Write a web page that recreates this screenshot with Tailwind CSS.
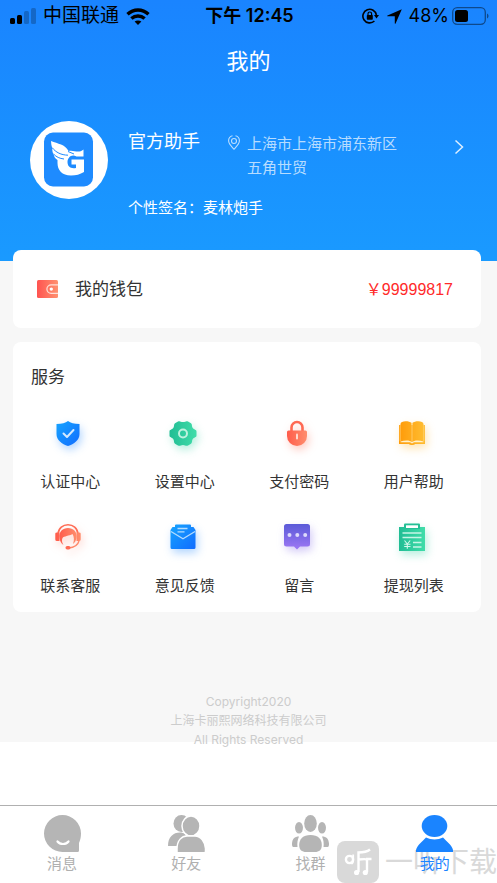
<!DOCTYPE html>
<html lang="zh-CN">

<head>
 <meta charset="UTF-8">
 <meta name="viewport" content="width=device-width, initial-scale=1.0">
 <title>我的</title>
 <script src="https://cdn.jsdelivr.net/npm/@tailwindcss/browser@4"></script>
</head>

<body class="relative flex min-h-screen flex-col bg-white font-['Inter','Noto_Sans_CJK_SC',sans-serif] text-[15px] text-[#333]">
 <!-- Header -->
 <header class="bg-linear-to-b from-[#1a84ff] to-[#1a9aff] pb-[41px] text-white">
  <div class="grid h-8 grid-cols-3 items-center pr-2 pl-[10px] text-lg leading-8 text-black">
   <div class="flex items-center gap-[7px]">
    <svg class="h-[18px] w-[26px] shrink-0" viewBox="0 0 26 18">
     <rect x="0" y="11" width="5" height="6" rx="1.5" />
     <rect x="7" y="8" width="5" height="9" rx="1.5" />
     <rect x="14" y="4" width="5" height="13" rx="1.5" opacity=".22" />
     <rect x="21" y="1" width="5" height="16" rx="1.5" opacity=".22" />
    </svg>
    <span class="shrink-0 text-[19px]">中国联通</span>
    <svg class="h-[17px] w-6 shrink-0" viewBox="0 0 24 17" fill="none" stroke="#000" stroke-width="3.4">
     <path d="M1.5 6.3C7.5.6 16.5.6 22.5 6.3" />
     <path d="M5.4 10.6C9.2 7.1 14.8 7.1 18.600 10.6" />
     <path d="M12 17L8.600 13.600C10.500 12 13.500 12 15.400 13.600Z" fill="#000" stroke="none" />
    </svg>
   </div>
   <span class="text-center font-semibold whitespace-nowrap">下午 12:45</span>
   <div class="flex items-center justify-end">
    <svg class="mr-2 h-4 w-[17px]" viewBox="0 0 17 16" fill="none" stroke="#000" stroke-width="1.6">
     <path d="M12.400 13A6.800 6.800 0 1 1 14.400 7" />
     <path d="M12 7H17L14.500 10.500Z" fill="#000" stroke="none" />
     <rect x="4.800" y="7" width="6" height="4.800" rx=".8" fill="#000" stroke="none" />
     <path d="M6 7.500V5.800a1.800 1.800 0 0 1 3.600 0V7.500" stroke-width="1.200" />
    </svg>
    <svg class="mr-[7px] h-[15px] w-[15px]" viewBox="0 0 15 15">
     <path d="M14.800.3L8.600 14.500C8.400 15 7.800 15 7.800 14.300V7.200H.7C0 7.200 0 6.600.5 6.400Z" />
    </svg>
    <span>48%</span>
    <svg class="ml-[3px] h-[18px] w-[37px]" viewBox="0 0 37 18">
     <rect x=".7" y=".7" width="32.600" height="16.600" rx="4.500" fill="none" stroke="#000" stroke-opacity=".45" stroke-width="1.300" />
     <rect x="3" y="3" width="13" height="12" rx="2.500" />
     <path d="M35 6.500C37 7.200 37 10.800 35 11.500Z" opacity=".45" />
    </svg>
   </div>
  </div>

  <h1 class="text-center text-[22px] leading-[58px]">我的</h1>

  <div class="mt-[31px] flex items-start pr-[33px] pl-[30px]">
   <svg class="h-[78px] w-[78px] shrink-0" viewBox="0 0 78 78">
    <circle cx="39" cy="39" r="39" fill="#fff" />
    <rect x="14" y="11.500" width="49" height="54" rx="9" fill="#1e8bff" />
    <path d="M21 20C28 23 35 23 38.500 30C44 28.500 48 33 53.500 28.500V35.500H46.500C42 32.500 37.500 36 37.500 41C37.500 45.500 40.500 48 46 47V43.500H41.500V38.500H54V51C50 53.500 46 54.500 41 54.500C32 54.500 27.500 49 27.500 42V39C25 37.500 24 35.500 23.800 33.800C22.500 31.500 22.200 29.500 22.300 27.500C21.500 25 21 22.500 21 20Z" fill="#fff" />
    <path d="M22 26.500C26 31.500 31 34 38 34.200M23.500 33C26.500 36 29.500 37.500 34 38M38 30.500L44 33" fill="none" stroke="#1e8bff" stroke-width="1" />
   </svg>
   <div class="ml-5 grow pt-2">
    <div class="flex items-start">
     <h2 class="w-[100px] shrink-0 text-lg leading-[26px]">官方助手</h2>
     <div class="mt-[3px] flex gap-[7px] text-white/70">
      <svg class="mt-[3px] h-[15px] w-3 shrink-0" viewBox="0 0 12 15" fill="none" stroke="currentColor" stroke-width="1.100">
       <path d="M4.500.8C2.300 1.300.6 3.300.6 5.800C.6 9 3.500 11.500 6 14.200C8.500 11.500 11.400 9 11.400 5.800C11.400 3.300 9.700 1.300 7.500.8" />
       <circle cx="6" cy="6" r="2.500" />
      </svg>
      <p class="max-w-40 leading-6">上海市上海市浦东新区五角世贸</p>
     </div>
     <a href="#" class="mt-[10px] ml-auto" aria-label="个人资料">
      <svg class="h-4 w-[10px]" viewBox="0 0 10 16" fill="none" stroke="#fff" stroke-opacity=".85" stroke-width="1.500">
       <path d="M1.500 1.500L8.500 8L1.500 14.500" />
      </svg>
     </a>
    </div>
    <p class="mt-4 leading-6">个性签名：麦林炮手</p>
   </div>
  </div>
 </header>

 <!-- Content -->
 <main class="bg-[#f7f7f7] pr-4 pl-[13px]">
  <a href="#" class="relative -mt-[11px] flex h-[78px] items-center rounded-lg bg-white pr-7 pl-6">
   <svg class="h-[18px] w-[21px]" viewBox="0 0 21 18">
    <defs>
     <linearGradient id="wallet">
      <stop stop-color="#ff5350" />
      <stop offset="1" stop-color="#ff9270" />
     </linearGradient>
    </defs>
    <rect width="21" height="18" rx="1.500" fill="url(#wallet)" />
    <path d="M21 4.800H14.200a4.300 4.300 0 0 0 0 8.600H21" fill="none" stroke="#ffe0d8" stroke-width="1.200" />
    <circle cx="14.300" cy="9.100" r="1.700" fill="#fff" />
   </svg>
   <span class="ml-[17px] pt-[2px] text-[17px]">我的钱包</span>
   <span class="ml-auto pt-[2px] font-['Liberation_Sans','Noto_Sans_CJK_SC',sans-serif] text-base text-[#ff2a2a]">￥99999817</span>
  </a>

  <section class="mt-[14px] rounded-lg bg-white pt-[23px] pb-[14px]">
   <h2 class="pl-[18px] text-[17px] leading-6">服务</h2>
   <div class="mt-7 grid grid-cols-4 gap-y-[27px] pr-[10px] leading-6">
    <a href="#" class="flex flex-col items-center gap-[21px]">
     <svg class="h-8 w-9 drop-shadow-[2px_4px_4px_#1a84ff55]" viewBox="0 0 36 32">
      <defs>
       <linearGradient id="blue" x2="1" y2="1">
        <stop stop-color="#16a4ff" />
        <stop offset="1" stop-color="#116cff" />
       </linearGradient>
      </defs>
      <path d="M16 4C18.500 6 22 7 27.500 7V17C27.500 23 22 27 16 29C10 27 4.500 23 4.500 17V7C10 7 13.500 6 16 4Z" fill="url(#blue)" />
      <path d="M11.500 16.500L15 20L21.500 13" fill="none" stroke="#d4e9ff" stroke-width="2" stroke-linecap="round" stroke-linejoin="round" />
     </svg>
     认证中心
    </a>
    <a href="#" class="flex flex-col items-center gap-[21px]">
     <svg class="h-8 w-9 drop-shadow-[2px_4px_4px_#2dcf9f55]" viewBox="0 0 36 32">
      <defs>
       <linearGradient id="green">
        <stop stop-color="#21bd94" />
        <stop offset="1" stop-color="#40dda9" />
       </linearGradient>
      </defs>
      <path d="M11 4.500C13 3.500 13.500 5 16 5C18.500 5 19 3.500 21 4.500L24 6.200C25.500 7.500 24.500 9 25.700 11C27 12.700 29.500 12.500 29.500 14.500V18.500C29.500 20.500 27 20.300 25.700 22C24.500 24 25.500 25.500 24 26.800L21 28.500C19 29.500 18.500 28 16 28C13.500 28 13 29.500 11 28.500L8 26.800C6.500 25.500 7.500 24 6.300 22C5 20.300 2.500 20.500 2.500 18.500V14.500C2.500 12.500 5 12.700 6.300 11C7.500 9 6.500 7.500 8 6.200Z" fill="url(#green)" />
      <circle cx="16" cy="16.500" r="4" fill="none" stroke="#bff2df" stroke-width="2" />
     </svg>
     设置中心
    </a>
    <a href="#" class="flex flex-col items-center gap-[21px]">
     <svg class="h-8 w-9 drop-shadow-[2px_4px_4px_#ff6a5055]" viewBox="0 0 36 32">
      <defs>
       <linearGradient id="red">
        <stop stop-color="#ff5c4b" />
        <stop offset="1" stop-color="#ff8d6d" />
       </linearGradient>
      </defs>
      <path d="M10.500 15V10.500a5.500 5.500 0 0 1 11 0V15" fill="none" stroke="#ff6852" stroke-width="2.600" />
      <path d="M7.500 13.500H24.500Q26 13.500 26 15V19a10 10 0 0 1-20 0V15Q6 13.500 7.500 13.500Z" fill="url(#red)" />
      <path d="M16 17.500V21.500" stroke="#ffd9ce" stroke-width="2" stroke-linecap="round" />
     </svg>
     支付密码
    </a>
    <a href="#" class="flex flex-col items-center gap-[21px]">
     <svg class="h-8 w-9 drop-shadow-[2px_4px_4px_#ffb02055]" viewBox="0 0 36 32">
      <defs>
       <linearGradient id="orange">
        <stop stop-color="#ff9c0a" />
        <stop offset="1" stop-color="#ffbc30" />
       </linearGradient>
      </defs>
      <path d="M3 8H29V27H19C18.500 28.300 13.500 28.300 13 27H3Z" fill="url(#orange)" />
      <path d="M4.500 25.300H14L16 26.600L18 25.300H27.500V24.500C23 23 18 23 16 25.300C14 23 9 23 4.500 24.500Z" fill="#fff1ce" />
      <path d="M4.500 7C4.500 3.500 13 3.500 15.600 6V24C13 21.500 8 21.500 4.500 24Z M27.500 7C27.500 3.500 19 3.500 16.400 6V24C19 21.500 24 21.500 27.500 24Z" fill="url(#orange)" />
      <path d="M16 5.500V25M4.200 8V24M27.800 8V24" stroke="#ffdd96" stroke-width=".6" />
     </svg>
     用户帮助
    </a>
    <a href="#" class="flex flex-col items-center gap-[21px]">
     <svg class="h-8 w-9 drop-shadow-[2px_4px_4px_#ff6a5044]" viewBox="0 0 36 32">
      <path d="M6 13C6.500 7 11 3.800 16 3.800S25.500 7 26 13" fill="none" stroke="#ff6c55" stroke-width="1.600" />
      <path d="M3.300 12.500Q3.300 11.500 5 11.500H7.500V20H5Q3.300 20 3.300 18.500ZM28.700 12.500Q28.700 11.500 27 11.500H24.500V20H27Q28.700 20 28.700 18.500Z" fill="url(#red)" />
      <path d="M7.500 17C6.500 10.500 11 7 16 7S25.500 10.500 24.500 17C24 19.500 23 21.500 21 23C22.500 19 22 15.500 20.500 13C17 15 12 15 10.500 17C9.500 19 10 22 11.500 24C9 22.500 8 20 7.500 17Z" fill="url(#red)" />
      <path d="M27 20C26 24 22 26.500 16.500 27" fill="none" stroke="#ff8a6c" stroke-width="1.300" />
      <rect x="13.500" y="25" width="5" height="3.500" rx="1.700" fill="#ff6b55" />
     </svg>
     联系客服
    </a>
    <a href="#" class="flex flex-col items-center gap-[21px]">
     <svg class="h-8 w-9 drop-shadow-[2px_4px_4px_#1a84ff55]" viewBox="0 0 36 32">
      <path d="M8 6V4.500Q8 3.500 9 3.500H23Q24 3.500 24 4.500V6H26.500L28.500 9V26.500Q28.500 28 27 28H5Q3.500 28 3.500 26.500V9L5.500 6Z" fill="url(#blue)" />
      <path d="M4 10.500L16 17.800L28 10.500" fill="none" stroke="#b3dcff" stroke-width="1.300" />
      <path d="M10.500 7.500H20.500M10.500 10.800H17.500" stroke="#b3dcff" stroke-width="1.300" />
     </svg>
     意见反馈
    </a>
    <a href="#" class="flex flex-col items-center gap-[21px]">
     <svg class="h-8 w-9 drop-shadow-[2px_4px_4px_#7b61e855]" viewBox="0 0 36 32">
      <defs>
       <linearGradient id="purple" x2="0" y2="1">
        <stop stop-color="#5a5ad8" />
        <stop offset="1" stop-color="#9e78f4" />
       </linearGradient>
      </defs>
      <path d="M5.500 3H26.500Q29 3 29 5.500V23Q29 25.500 26.500 25.500H19L16 28.500L13 25.500H5.500Q3 25.500 3 23V5.500Q3 3 5.500 3Z" fill="url(#purple)" />
      <g fill="#dddafb">
       <circle cx="8.500" cy="14" r="2" />
       <circle cx="16.300" cy="14" r="2" />
       <circle cx="24.200" cy="14" r="2" />
      </g>
     </svg>
     留言
    </a>
    <a href="#" class="flex flex-col items-center gap-[21px]">
     <svg class="h-8 w-9 drop-shadow-[2px_4px_4px_#2dcf9f55]" viewBox="0 0 36 32">
      <path d="M3 6H29V30H3Z" fill="url(#green)" />
      <path d="M9 2.500H23Q24 2.500 24 3.500V8H8V3.500Q8 2.500 9 2.500Z" fill="#23bf95" />
      <rect x="10" y="4.300" width="12" height="2.700" fill="#fff" />
      <path d="M6.500 12H25.500M6.500 16.500H25.500M17 21.500H25.500M17 26H25.500" stroke="#c6f5e6" stroke-width="1.400" />
      <path d="M8.500 19.500L11.300 23L14.200 19.500M11.300 23V27.800M8.200 23.200H14.500M8.200 25.500H14.500" fill="none" stroke="#d4f8ec" stroke-width="1.100" />
     </svg>
     提现列表
    </a>
   </div>
  </section>

  <footer class="mt-20 -mb-[7px] pl-[3px] text-center text-xs leading-[19px] text-[#ccc]">
   <p>Copyright2020</p>
   <p>上海卡丽熙网络科技有限公司</p>
   <p>All Rights Reserved</p>
  </footer>
 </main>

 <!-- Watermark -->
 <div class="absolute right-0 bottom-0 flex items-center gap-[6px] text-[28px] leading-[42px] whitespace-nowrap text-[#d9d9d9]">
  <svg class="h-[42px] w-[42px]" viewBox="0 0 42 42" fill="none" stroke="#fff" stroke-width="2.400">
   <rect width="42" height="42" rx="8" fill="#d9d9d9" stroke="none" />
   <circle cx="12.500" cy="18.500" r="3.600" />
   <path d="M16.200 13.500V20C16.200 21.500 15.500 22.500 14.500 23" stroke-width="1.800" />
   <path d="M33 8.500C30 10.800 26 11.500 21.500 11.500V31M21.500 18.500C26 18 30 18 30 18.500V31M29 18H34.500" />
   <circle cx="19.600" cy="31.500" r="2.600" fill="#fff" stroke="none" />
   <circle cx="28.300" cy="31.500" r="2.600" fill="#fff" stroke="none" />
  </svg>
  <span>一听下载</span>
 </div>

 <!-- Tab bar -->
 <nav class="relative mt-auto grid grid-cols-4 border-t border-[#b0b0b0] pt-[9px] pb-2 leading-[23px] text-[#b0b0b0]">
  <a href="#" class="flex flex-col items-center">
   <svg class="h-[37px] w-[37px]" viewBox="0 0 37 37">
    <path d="M18.500 0A18.500 18.500 0 0 1 37 18.500C37 22 36.300 25 35 28V35.500Q35 37 33.500 37H18.500A18.500 18.500 0 0 1 18.500 0Z" fill="#b5b5b5" />
    <path d="M13.500 26.500C16 29.800 22 29.800 24.500 26.500" fill="none" stroke="#fff" stroke-width="2.200" stroke-linecap="round" />
   </svg>
   消息
  </a>
  <a href="#" class="flex flex-col items-center">
   <svg class="h-[37px] w-[37px]" viewBox="0 0 37 37" fill="#b5b5b5">
    <ellipse cx="13.500" cy="8.500" rx="8" ry="8.500" />
    <path d="M0 31C0 22 5 17.500 12 17.500C16 17.500 18 20 18 20L10 31Z" />
    <ellipse cx="23" cy="11" rx="9" ry="10" stroke="#fff" stroke-width="1.500" />
    <path d="M9 38V34C9 25 14 21 19 21H27C33 21 37 27 37.500 33.500V36Q37.500 38 36 38Z" stroke="#fff" stroke-width="1.500" />
   </svg>
   好友
  </a>
  <a href="#" class="flex flex-col items-center">
   <svg class="h-[37px] w-[37px]" viewBox="0 0 37 37" fill="#b5b5b5">
    <ellipse cx="18.500" cy="8.500" rx="6.300" ry="8.500" />
    <ellipse cx="7" cy="12.800" rx="4" ry="5.800" />
    <ellipse cx="30" cy="12.800" rx="4" ry="5.800" />
    <path d="M7 21.500C5.500 25 5 28 5.500 32H1.500C0 32 0 30 0 28.500C.3 24 2.500 21.500 7 21.500ZM30 21.500C31.500 25 32 28 31.500 32H35.500C37 32 37 30 37 28.500C36.700 24 34.500 21.500 30 21.500Z" />
    <path d="M18.500 20C26 20 29.800 24 29.800 30C29.800 35 27 37 23 37H14C10 37 7.200 35 7.200 30C7.200 24 11 20 18.500 20Z" />
   </svg>
   找群
  </a>
  <a href="#" class="flex flex-col items-center text-[#1a84ff]">
   <svg class="h-[37px] w-[37px]" viewBox="0 0 37 37" fill="#1a84ff">
    <ellipse cx="18.500" cy="11" rx="12.800" ry="11" />
    <path d="M10 22.500C15 25 22 25 27 22.500C30 26 36 30 37 35V37H0V35C1 30 7 26 10 22.500Z" />
   </svg>
   我的
  </a>
 </nav>
</body>

</html>
